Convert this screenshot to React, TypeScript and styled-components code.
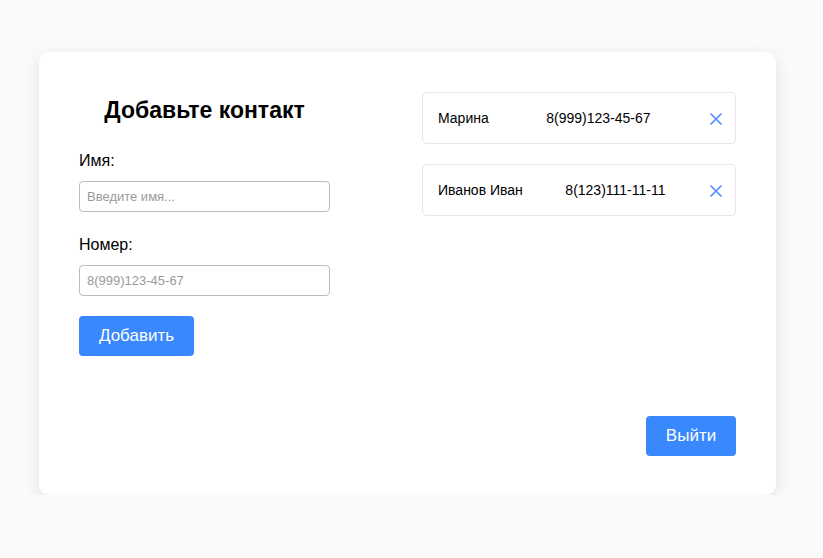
import React from "react";
import styled, { createGlobalStyle } from "styled-components";

const Global = createGlobalStyle`
  html, body { margin: 0; padding: 0; background: #fafafa; }
  body { font-family: "Liberation Sans", Arial, sans-serif; color: #000; }
  * { box-sizing: border-box; }
`;

const Page = styled.div`
  padding: 52px 0 0 39px;
`;

const Card = styled.div`
  width: 737px;
  height: 443px;
  background: #fff;
  border-radius: 10px;
  box-shadow: 0 5px 16px rgba(0, 0, 0, 0.1);
  padding: 40px 40px 39px;
  display: flex;
  justify-content: space-between;
`;

const Form = styled.div`
  width: 251px;
  display: flex;
  flex-direction: column;
`;

const Title = styled.h2`
  margin: 5px 0 0;
  font-size: 23px;
  line-height: 27px;
  font-weight: bold;
  text-align: center;
`;

const Label = styled.label`
  font-size: 16px;
  line-height: 18px;
  margin-top: ${(p: { $top: number }) => p.$top}px;
`;

const Input = styled.input`
  margin-top: 11px;
  width: 251px;
  height: 31px;
  border: 1px solid #bdbdbd;
  border-radius: 4px;
  padding: 0 7px;
  font-family: "Liberation Sans", Arial, sans-serif;
  font-size: 13px;
  outline: none;
  &::placeholder { color: #9a9a9a; }
`;

const Button = styled.button`
  height: 40px;
  width: ${(p: { $w: number }) => p.$w}px;
  border: none;
  border-radius: 4px;
  background: #3a88fd;
  color: #fff;
  font-family: "Liberation Sans", Arial, sans-serif;
  font-size: 17px;
  cursor: pointer;
  padding: 0;
`;

const AddButton = styled(Button)`
  margin-top: 20px;
`;

const Side = styled.div`
  width: 314px;
  display: flex;
  flex-direction: column;
  gap: 20px;
`;

const Item = styled.div`
  height: 52px;
  border: 1px solid #e6e6e6;
  border-radius: 5px;
  padding: 0 11px 0 15px;
  display: flex;
  align-items: center;
  justify-content: space-between;
  font-size: 14px;
`;

const Remove = styled.button`
  border: none;
  background: none;
  padding: 0;
  width: 16px;
  height: 16px;
  display: flex;
  align-items: center;
  justify-content: center;
  cursor: pointer;
  margin-top: 2px;
`;

const Logout = styled(Button)`
  margin-top: auto;
  align-self: flex-end;
`;

const X = () => (
  <svg width="12" height="12" viewBox="0 0 12 12">
    <path d="M1 1L11 11M11 1L1 11" stroke="#4a8bff" strokeWidth="1.6" strokeLinecap="round" />
  </svg>
);

const contacts = [
  { name: "Марина", phone: "8(999)123-45-67" },
  { name: "Иванов Иван", phone: "8(123)111-11-11" },
];

export default function App() {
  return (
    <>
      <Global />
      <Page>
        <Card>
          <Form>
            <Title>Добавьте контакт</Title>
            <Label $top={28}>Имя:</Label>
            <Input placeholder="Введите имя..." />
            <Label $top={24}>Номер:</Label>
            <Input placeholder="8(999)123-45-67" />
            <AddButton $w={115}>Добавить</AddButton>
          </Form>
          <Side>
            {contacts.map((c) => (
              <Item key={c.name}>
                <span>{c.name}</span>
                <span>{c.phone}</span>
                <Remove><X /></Remove>
              </Item>
            ))}
            <Logout $w={90}>Выйти</Logout>
          </Side>
        </Card>
      </Page>
    </>
  );
}
